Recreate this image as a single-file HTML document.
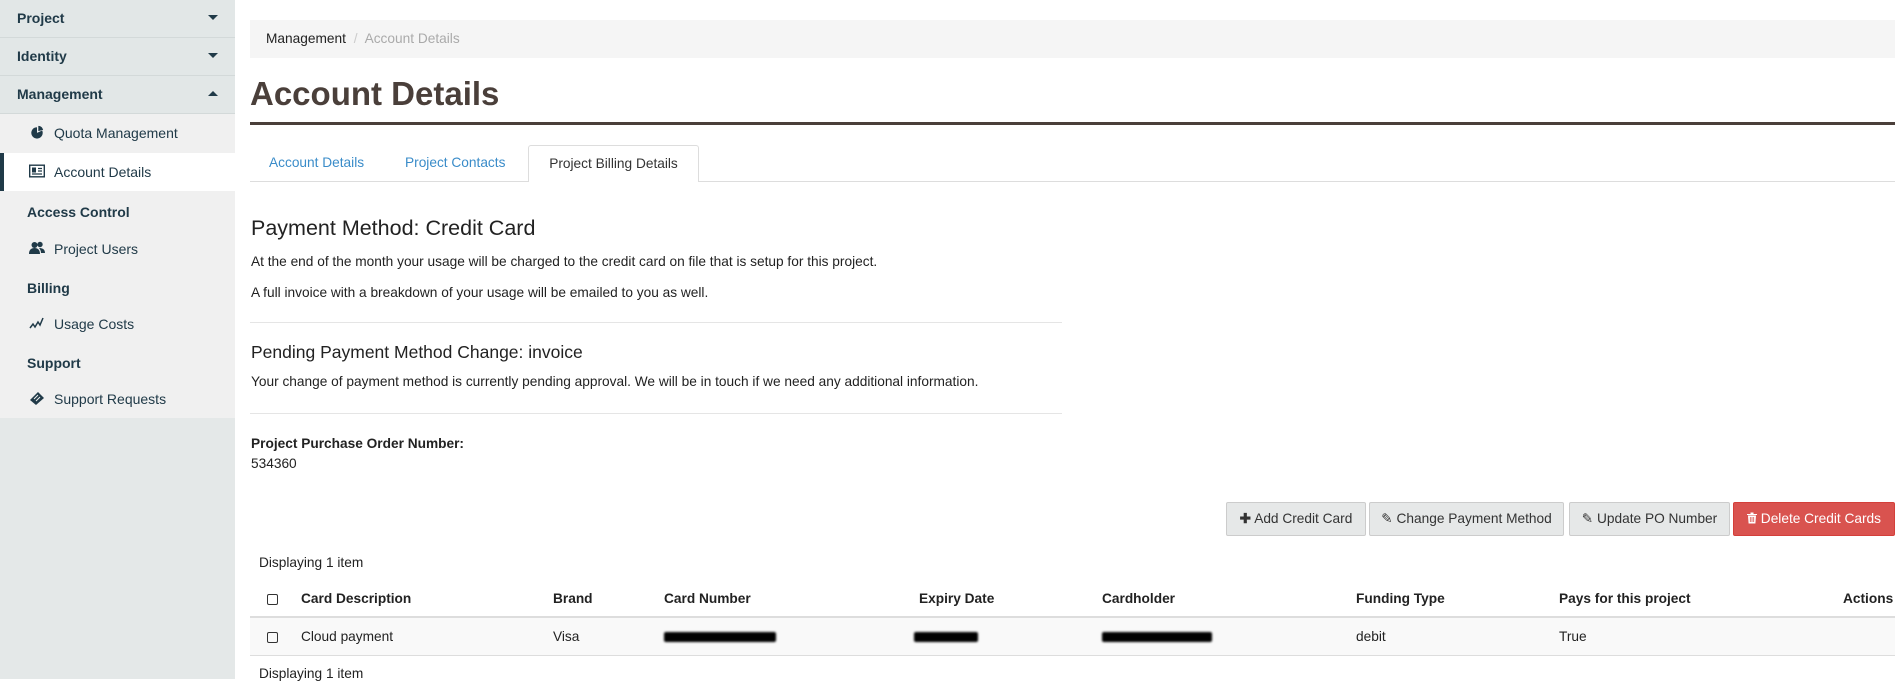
<!DOCTYPE html>
<html><head><meta charset="utf-8"><style>
*{box-sizing:border-box;margin:0;padding:0}
body{width:1904px;height:679px;overflow:hidden;font-family:"Liberation Sans",sans-serif;font-size:13.7px;color:#222;background:#fff;position:relative}
.abs{position:absolute}
#side{position:absolute;left:0;top:0;width:235px;height:679px;background:#e4e8e8}
.sec{position:absolute;left:0;width:235px;height:38px;background:#e2e7e7;border-bottom:1px solid #d3d9d9;font-weight:bold;color:#203a48;font-size:14px;padding:10px 0 0 17px}
.sec .car{position:absolute;right:17px;top:15px;width:0;height:0;border-left:5px solid transparent;border-right:5px solid transparent;border-top:5px solid #203a48}
.sec .up{border-top:0;border-bottom:5px solid #203a48}
.sub{position:absolute;left:0;top:114px;width:235px;height:304px;background:#f0f0f0}
.it{position:absolute;left:0;width:235px;height:38px;color:#203a48;font-size:14px;padding:11px 0 0 54px}
.hd{position:absolute;left:27px;font-weight:bold;color:#203a48;font-size:14px}
.ic{position:absolute;left:29px;top:11px;width:16px;height:14px}
.btn{position:absolute;top:502px;height:34px;border:1px solid #ccc;background:#e6e8e8;border-radius:2px;font-size:13.7px;color:#333;text-align:center;line-height:32px}
.th{position:absolute;top:591px;font-weight:bold;font-size:13.7px}
.td{position:absolute;top:629px;font-size:13.7px}
.cb{position:absolute;width:11px;height:11px;border:1px solid #333;border-radius:2px;left:267px}
.bar{position:absolute;top:632px;height:10px;background:#000;border-radius:2px;filter:blur(1px)}
</style></head><body>
<div id="side">
<div class="sec" style="top:0">Project<span class="car"></span></div>
<div class="sec" style="top:38px">Identity<span class="car"></span></div>
<div class="sec" style="top:76px">Management<span class="car up"></span></div>
<div class="sub">
<div class="it" style="top:0"><svg class="ic" viewBox="0 0 16 16"><circle cx="8" cy="9" r="6.5" fill="#203a48"/><path d="M8 9V1.5A7 7 0 0 1 14.5 6Z" fill="#f0f0f0"/><path d="M9.5 7V1A6 6 0 0 1 15 5.5Z" fill="#203a48"/></svg>Quota Management</div>
<div class="it" style="top:39px;background:#fff;border-left:4px solid #203a48;padding-left:50px"><svg class="ic" style="left:25px" viewBox="0 0 16 13"><rect x="0.7" y="0.7" width="14.6" height="11.6" fill="none" stroke="#203a48" stroke-width="1.4"/><rect x="3" y="3" width="4" height="5" fill="#203a48"/><path d="M9 4h4M9 6.5h4M3 9.5h10" stroke="#203a48" stroke-width="1.2"/></svg>Account Details</div>
<div class="hd" style="top:90px">Access Control</div>
<div class="it" style="top:116px"><svg class="ic" viewBox="0 0 16 14"><circle cx="5.5" cy="4" r="3" fill="#203a48"/><circle cx="11" cy="3.5" r="2.7" fill="#203a48"/><path d="M0 13c0-4 2-6 5.5-6s5.5 2 5.5 6Z M10 7c3 0 6 1 6 5h-4c0-2-1-4-2-5Z" fill="#203a48"/></svg>Project Users</div>
<div class="hd" style="top:166px">Billing</div>
<div class="it" style="top:191px"><svg class="ic" viewBox="0 0 16 14"><path d="M1 12l3-4 2 3 3-5 2 3 3-7" fill="none" stroke="#203a48" stroke-width="1.5"/></svg>Usage Costs</div>
<div class="hd" style="top:241px">Support</div>
<div class="it" style="top:266px"><svg class="ic" viewBox="0 0 16 14"><path d="M1 9L9 1l6 6-8 7Z" fill="#203a48"/><path d="M5 8l4-4M7 10l4-4" stroke="#f0f0f0" stroke-width="1"/></svg>Support Requests</div>
</div>
</div>

<div class="abs" style="left:250px;top:20px;width:1645px;height:38px;background:#f5f5f5;padding:11px 16px;font-size:13.7px;color:#222">Management <span style="color:#ccc;padding:0 4px">/</span> <span style="color:#aaa">Account Details</span></div>
<div class="abs" style="left:250px;top:75px;font-size:33px;font-weight:bold;color:#4a3f3a">Account Details</div>
<div class="abs" style="left:250px;top:122px;width:1645px;height:3px;background:#4a3f3a"></div>

<div class="abs" style="left:250px;top:181px;width:1645px;height:1px;background:#ddd"></div>
<div class="abs" style="left:269px;top:155px;color:#3a8cc9">Account Details</div>
<div class="abs" style="left:405px;top:155px;color:#3a8cc9">Project Contacts</div>
<div class="abs" style="left:528px;top:145px;width:171px;height:37px;background:#fff;border:1px solid #ddd;border-bottom:none;border-radius:3px 3px 0 0;text-align:center;padding-top:10px;color:#333">Project Billing Details</div>

<div class="abs" style="left:251px;top:216px;font-size:21.5px;color:#222">Payment Method: Credit Card</div>
<div class="abs" style="left:251px;top:254px">At the end of the month your usage will be charged to the credit card on file that is setup for this project.</div>
<div class="abs" style="left:251px;top:285px">A full invoice with a breakdown of your usage will be emailed to you as well.</div>
<div class="abs" style="left:250px;top:322px;width:812px;height:1px;background:#e5e5e5"></div>
<div class="abs" style="left:251px;top:342px;font-size:17.5px">Pending Payment Method Change: invoice</div>
<div class="abs" style="left:251px;top:374px">Your change of payment method is currently pending approval. We will be in touch if we need any additional information.</div>
<div class="abs" style="left:250px;top:413px;width:812px;height:1px;background:#e5e5e5"></div>
<div class="abs" style="left:251px;top:436px;font-weight:bold">Project Purchase Order Number:</div>
<div class="abs" style="left:251px;top:456px">534360</div>

<div class="btn" style="left:1226px;width:140px"><b>✚</b> Add Credit Card</div>
<div class="btn" style="left:1369px;width:195px">✎ Change Payment Method</div>
<div class="btn" style="left:1569px;width:161px">✎ Update PO Number</div>
<div class="btn" style="left:1733px;width:162px;background:#d9534f;border-color:#d43f3a;color:#fff"><svg width="10" height="12" viewBox="0 0 10 12" style="vertical-align:-1px"><path d="M0 2h10v1H0ZM3.5 0.5h3v1.5h-3ZM1 3.5h8l-0.6 8H1.6Z" fill="#fff"/><path d="M3.3 5v5M5 5v5M6.7 5v5" stroke="#d9534f" stroke-width="0.8"/></svg> Delete Credit Cards</div>

<div class="abs" style="left:259px;top:555px">Displaying 1 item</div>
<div class="cb" style="top:594px"></div>
<div class="th" style="left:301px">Card Description</div>
<div class="th" style="left:553px">Brand</div>
<div class="th" style="left:664px">Card Number</div>
<div class="th" style="left:919px">Expiry Date</div>
<div class="th" style="left:1102px">Cardholder</div>
<div class="th" style="left:1356px">Funding Type</div>
<div class="th" style="left:1559px">Pays for this project</div>
<div class="th" style="left:1843px">Actions</div>
<div class="abs" style="left:250px;top:616px;width:1645px;height:2px;background:#ddd"></div>
<div class="abs" style="left:250px;top:618px;width:1645px;height:38px;background:#f9f9f9;border-bottom:1px solid #ddd"></div>
<div class="cb" style="top:632px"></div>
<div class="td" style="left:301px">Cloud payment</div>
<div class="td" style="left:553px">Visa</div>
<div class="bar" style="left:664px;width:112px"></div>
<div class="bar" style="left:914px;width:64px"></div>
<div class="bar" style="left:1102px;width:110px"></div>
<div class="td" style="left:1356px">debit</div>
<div class="td" style="left:1559px">True</div>
<div class="abs" style="left:259px;top:666px">Displaying 1 item</div>
</body></html>
